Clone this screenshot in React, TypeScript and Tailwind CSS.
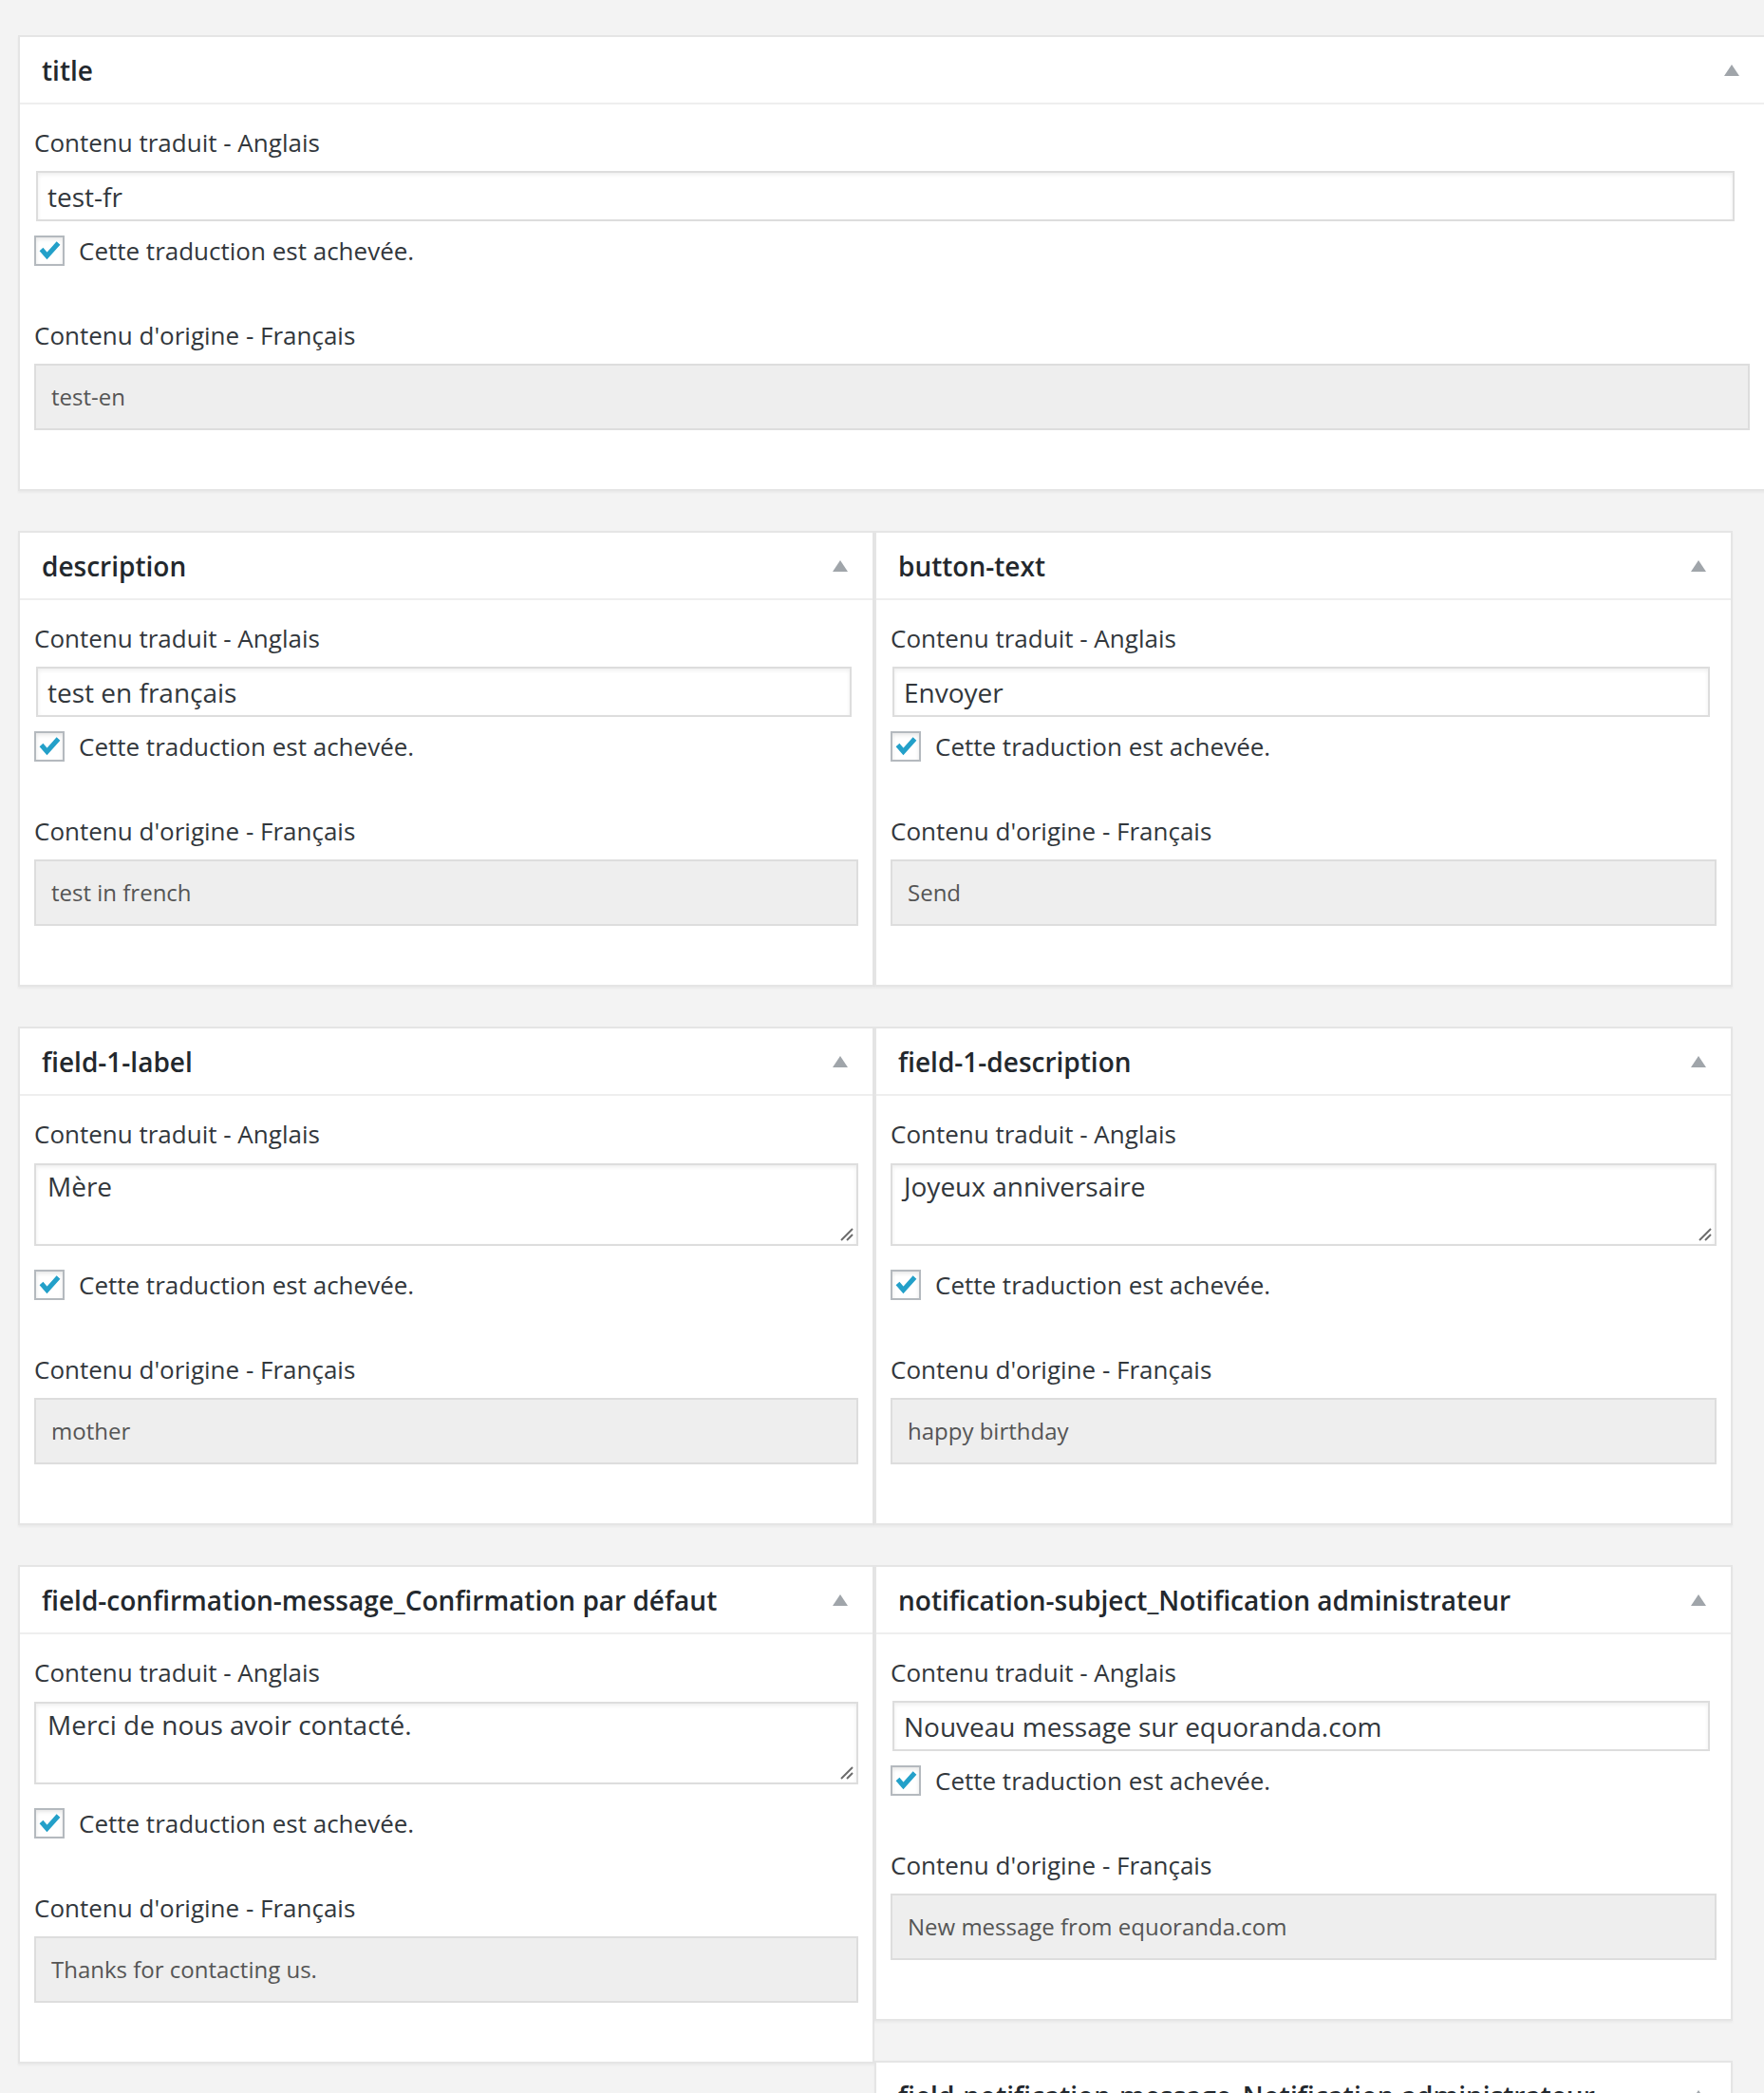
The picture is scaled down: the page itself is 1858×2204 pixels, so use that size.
import React from "react";

type CardProps = {
  title: string;
  value: string;
  original: string;
  multiline?: boolean;
  className?: string;
};

function Triangle() {
  return (
    <svg width="16" height="12" viewBox="0 0 16 12" className="shrink-0">
      <polygon points="8,0 16,12 0,12" fill="#a0a5aa" />
    </svg>
  );
}

function CheckBox() {
  return (
    <span className="w-[32px] h-[32px] shrink-0 border-2 border-[#b4b9be] bg-white shadow-[inset_0_2px_4px_rgba(0,0,0,0.1)] flex items-center justify-center">
      <svg width="28" height="28" viewBox="0 0 28 28">
        <path d="M5.5 12.5 L11.5 19.5 L23.5 6" fill="none" stroke="#23a0c9" strokeWidth="5" />
      </svg>
    </span>
  );
}

function Card({ title, value, original, multiline, className }: CardProps) {
  return (
    <div
      className={`bg-white border-2 border-[#e5e5e5] shadow-[0_2px_2px_rgba(0,0,0,0.04)] ${className ?? ""}`}
    >
      <div className="h-[71px] flex items-center justify-between pl-[23px] pr-[26px] border-b-2 border-[#eeeeee]">
        <h2 className="text-[28px] font-semibold leading-[40px] text-[#23282d] whitespace-nowrap">
          {title}
        </h2>
        <Triangle />
      </div>
      <div className="pt-[22px] pb-[62px] px-[15px]">
        <div className="text-[26px] leading-[36px] text-[#32373c]">Contenu traduit - Anglais</div>
        {multiline ? (
          <div className="relative mt-[13px]">
            <textarea
              readOnly
              defaultValue={value}
              className="block w-full h-[87px] border-2 border-[#dddddd] bg-white px-[12px] pt-[3px] text-[28px] leading-[39px] text-[#32373c] shadow-[inset_0_2px_4px_rgba(0,0,0,0.07)] outline-none resize-none"
            />
            <svg
              width="14"
              height="14"
              viewBox="0 0 14 14"
              className="absolute right-[5px] bottom-[5px]"
            >
              <path d="M13 1 L1 13" stroke="#6b6b6b" strokeWidth="2" />
              <path d="M13 7 L7 13" stroke="#6b6b6b" strokeWidth="2" />
            </svg>
          </div>
        ) : (
          <input
            readOnly
            defaultValue={value}
            className="block mt-[12px] ml-[2px] w-[99%] h-[53px] border-2 border-[#dddddd] bg-white px-[10px] text-[28px] text-[#32373c] shadow-[inset_0_2px_4px_rgba(0,0,0,0.07)] outline-none"
          />
        )}
        <div className={`flex items-center gap-[15px] h-[32px] ${multiline ? "mt-[25px]" : "mt-[15px]"}`}>
          <CheckBox />
          <span className="text-[26px] leading-[32px] text-[#32373c]">Cette traduction est achevée.</span>
        </div>
        <div className="mt-[55px] text-[26px] leading-[36px] text-[#32373c]">Contenu d'origine - Français</div>
        <div className="mt-[12px] h-[70px] bg-[#eeeeee] border-2 border-[#dddddd] flex items-center px-[16px] text-[24px] text-[#555555]">
          {original}
        </div>
      </div>
    </div>
  );
}

export default function App() {
  return (
    <div className="w-[1858px] h-[2204px] overflow-hidden bg-[#f3f3f3] font-['Open_Sans',sans-serif]">
      <div className="pl-[19px] pt-[37px] flex flex-col gap-[42px]">
        <Card title="title" value="test-fr" original="test-en" className="w-[1841px]" />
        <div className="flex items-start">
          <div className="w-[902px] flex flex-col gap-[42px]">
            <Card title="description" value="test en français" original="test in french" />
            <Card title="field-1-label" value="Mère" original="mother" multiline />
            <Card
              title="field-confirmation-message_Confirmation par défaut"
              value="Merci de nous avoir contacté."
              original="Thanks for contacting us."
              multiline
            />
          </div>
          <div className="w-[904px] flex flex-col gap-[42px]">
            <Card title="button-text" value="Envoyer" original="Send" />
            <Card title="field-1-description" value="Joyeux anniversaire" original="happy birthday" multiline />
            <Card
              title="notification-subject_Notification administrateur"
              value="Nouveau message sur equoranda.com"
              original="New message from equoranda.com"
            />
            <Card
              title="field-notification-message_Notification administrateur"
              value="Nouveau message"
              original="New message"
              multiline
            />
          </div>
        </div>
      </div>
    </div>
  );
}
